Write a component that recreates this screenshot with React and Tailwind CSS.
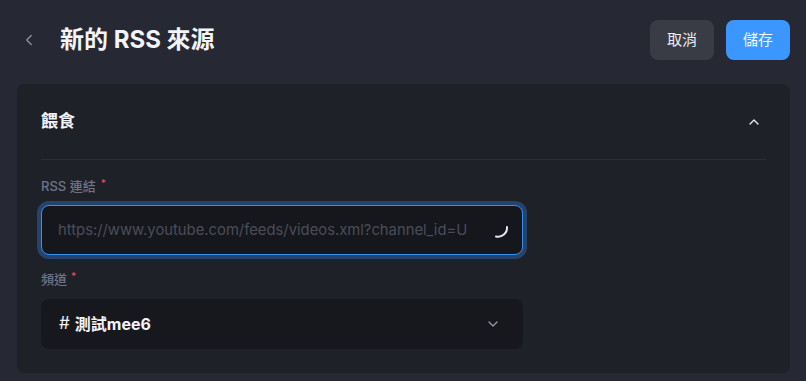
import React from "react";
import { ChevronLeft, ChevronUp, ChevronDown } from "lucide-react";

const font = {
  fontFamily: 'Inter, "Noto Sans CJK TC", sans-serif',
};

export default function App() {
  return (
    <div
      className="w-[806px] h-[381px] bg-[#262833] text-white overflow-hidden"
      style={font}
    >
      {/* Header */}
      <div className="h-[84px] flex items-start justify-between pl-[20px] pr-[16px] pt-[20px]">
        <div className="flex items-center h-[40px]">
          <ChevronLeft className="w-[18px] h-[18px] text-[#8e919c]" strokeWidth={1.8} />
          <h1 className="ml-[22px] text-[24px] font-bold leading-none text-[#f3f4f7]">
            新的 RSS 來源
          </h1>
        </div>
        <div className="flex gap-[12px]">
          <button className="w-[64px] h-[40px] rounded-[8px] bg-[#3a3c45] text-[15px] text-[#eceef2]">
            取消
          </button>
          <button className="w-[64px] h-[40px] rounded-[8px] bg-[#3b97ff] text-[15px] text-[#f4f8ff]">
            儲存
          </button>
        </div>
      </div>

      {/* Card */}
      <div className="mx-[17px] w-[773px] h-[289px] rounded-[8px] bg-[#1f2129] px-[24px]">
        <div className="h-[76px] flex items-center justify-between border-b border-[#2c2e37]">
          <span className="text-[17px] font-bold text-[#f3f4f7] mt-[1px]">餵食</span>
          <ChevronUp className="w-[16px] h-[16px] text-[#e8eaee] mr-[4px]" strokeWidth={2} />
        </div>

        <div className="pt-[17px]">
          <div className="text-[13px] font-medium text-[#6f7489] leading-[18px] flex items-start">
            RSS 連結
            <span className="ml-[5px] text-[#f0445d] text-[10px] leading-[12px]">*</span>
          </div>
          <div className="mt-[10px] w-[482px] h-[50px] rounded-[8px] border border-[#3b8fea] ring-4 ring-[#24436e] bg-[#16171d] flex items-center pl-[16px] pr-[12px] justify-between">
            <span className="text-[14.8px] text-[#4a4d58] whitespace-nowrap overflow-hidden w-[409px]">
              https://www.youtube.com/feeds/videos.xml?channel_id=UC
            </span>
            <svg width="22" height="22" viewBox="0 0 22 22" className="mt-[4px]">
              <path
                d="M19 6 A9 9 0 0 1 8 15.5"
                fill="none"
                stroke="#e7e8ec"
                strokeWidth="2"
                strokeLinecap="round"
              />
            </svg>
          </div>

          <div className="mt-[15px] text-[13px] font-medium text-[#6f7489] leading-[18px] flex items-start">
            頻道
            <span className="ml-[4px] text-[#f0445d] text-[10px] leading-[12px]">*</span>
          </div>
          <div className="mt-[11px] w-[482px] h-[50px] rounded-[8px] bg-[#17181e] flex items-center justify-between pl-[18px] pr-[22px]">
            <span className="text-[16px] font-bold text-[#f3f4f7] flex items-center">
              <span className="font-normal text-[17px] mr-[5px]">#</span>測試mee6
            </span>
            <ChevronDown className="w-[16px] h-[16px] text-[#9a9dab]" strokeWidth={1.8} />
          </div>
        </div>
      </div>
    </div>
  );
}
